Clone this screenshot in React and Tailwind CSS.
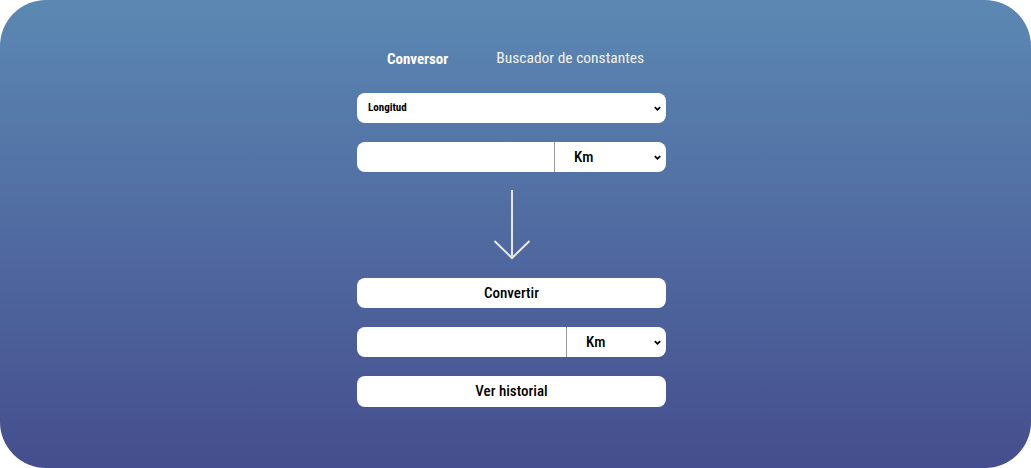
import { useState } from 'react';

const font = { fontFamily: '"Roboto Condensed", "Liberation Sans Narrow", Roboto, sans-serif' };

const Chevron = () => (
  <svg className="w-[9px] h-[9px] text-black" viewBox="0 0 10 10" fill="none" stroke="currentColor" strokeWidth="2">
    <path d="M2 3.5 L5 6.5 L8 3.5" />
  </svg>
);

const UnitRow = ({ split }) => (
  <div className="flex h-[30px] bg-white rounded-[8px] overflow-hidden">
    <input className="h-full outline-none px-2 bg-transparent border-r border-[#9a9a9a]" style={{ width: split }} />
    <div className="flex-1 flex items-center justify-between pl-[19px] pr-[4px]">
      <span className="text-[15px] font-medium text-black">Km</span>
      <Chevron />
    </div>
  </div>
);

export default function App() {
  const [tab, setTab] = useState('conversor');

  return (
    <div className="w-[1031px] h-[468px] bg-white" style={font}>
      <div className="w-full h-full rounded-[46px] bg-gradient-to-b from-[#5b88b3] to-[#454e8e] flex flex-col items-center pt-[49px]">
        {/* Tabs */}
        <div className="flex items-center gap-[48px] h-[20px] text-white text-[15px]">
          <button onClick={() => setTab('conversor')} className="font-bold">Conversor</button>
          <button onClick={() => setTab('buscador')} className="font-normal text-[15.5px] text-[#f2f2ea]">Buscador de constantes</button>
        </div>

        <div className="w-[309px] mt-[24px] mr-[8px] flex flex-col">
          {/* Magnitude select */}
          <div className="flex items-center justify-between h-[30px] bg-white rounded-[8px] pl-[11px] pr-[4px]">
            <span className="text-[11px] font-bold text-black">Longitud</span>
            <Chevron />
          </div>

          <div className="mt-[19px]">
            <UnitRow split={198} />
          </div>

          {/* Arrow */}
          <div className="h-[106px] flex justify-center pt-[18px]">
            <svg width="40" height="70" viewBox="0 0 40 70" fill="none" stroke="#e9e9e4" strokeWidth="2">
              <path d="M20 0 V68" />
              <path d="M2.5 51 L20 68 L37.5 51" />
            </svg>
          </div>

          <button className="h-[30px] bg-white rounded-[8px] text-[15px] font-medium text-black">Convertir</button>

          <div className="mt-[19px]">
            <UnitRow split={210} />
          </div>

          <button className="mt-[19px] h-[31px] bg-white rounded-[8px] text-[15px] font-medium text-black">Ver historial</button>
        </div>
      </div>
    </div>
  );
}
